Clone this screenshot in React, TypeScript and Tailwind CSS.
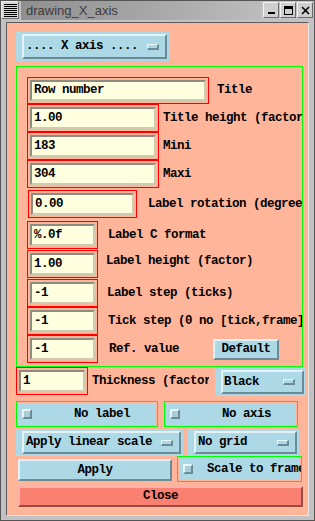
import React from "react";

const raised =
  "border-2 border-t-[#e2f2f7] border-l-[#e2f2f7] border-b-[#6b8c96] border-r-[#6b8c96] bg-[#add8e6]";
const entry =
  "flex-1 flex items-center pl-[2px] bg-[#ffffe0] border-2 border-t-[#8c8c82] border-l-[#8c8c82] border-b-[#cdcbb2] border-r-[#cdcbb2]";

const Indicator = ({ cls }: { cls: string }) => (
  <span
    className={`block shrink-0 w-[12px] h-[6px] bg-[#add8e6] border-t border-l border-t-[#e8f6fa] border-l-[#e8f6fa] border-b-2 border-r-2 border-b-[#6b8c96] border-r-[#6b8c96] ${cls}`}
  />
);

const Check = () => (
  <span className="block shrink-0 w-[10px] h-[10px] bg-[#a9cdd8] border-2 border-t-[#e8f6fa] border-l-[#e8f6fa] border-b-[#6b8c96] border-r-[#6b8c96]" />
);

const Menu = ({ outer, label, textCls, indCls }: { outer: string; label: string; textCls: string; indCls: string }) => (
  <div className={`shrink-0 bg-[#add8e6] pl-[6px] pr-[2px] py-[2px] ${outer}`}>
    <div className={`h-full flex items-center ${raised}`}>
      <span className={`whitespace-pre ${textCls}`}>{label}</span>
      <Indicator cls={`ml-auto ${indCls}`} />
    </div>
  </div>
);

const Field = ({ box, value }: { box: string; value: string }) => (
  <div className={`shrink-0 flex h-full border border-[#ff0000] p-[2px] ${box}`}>
    <div className={entry}>{value}</div>
  </div>
);

const CheckBox = ({ cls, label, textCls }: { cls: string; label: string; textCls: string }) => (
  <div className={`shrink-0 border border-[#00ff00] p-[1px] overflow-hidden ${cls}`}>
    <div className="h-full bg-[#add8e6] flex items-center pl-[4px] whitespace-nowrap">
      <Check />
      <span className={`shrink-0 ${textCls}`}>{label}</span>
    </div>
  </div>
);

export default function App() {
  return (
    <div className="w-[315px] h-[521px] bg-[#c2c2c2] border border-[#555555] flex flex-col overflow-hidden font-['Liberation_Mono',monospace] font-bold text-[12.5px] tracking-[-0.5px] text-black">
      {/* title bar */}
      <div className="h-[20px] flex tracking-normal">
        <div className="w-[18px] h-[18px] bg-[#d6d6d6] border border-t-[#f0f0f0] border-l-[#f0f0f0] border-b-[#707070] border-r-[#707070] flex items-center justify-center">
          <svg width="13" height="13" viewBox="0 0 13 13">
            {[0, 2, 4, 6, 8, 10, 12].map((y) => (
              <rect key={y} x="0" y={y} width="13" height="1" fill="#000" />
            ))}
          </svg>
        </div>
        <div className="ml-[2px] w-[240px] h-[19px] bg-gradient-to-r from-[#8f8f8f] to-[#bcbcbc] flex items-center pl-[5px] font-['Liberation_Sans',sans-serif] font-normal text-[13px] text-[#3c3c3c]">
          drawing_X_axis
        </div>
        <div className="flex gap-[1px] ml-[2px] mt-[1px]">
          <div className="w-[16px] h-[16px] bg-[#cfcfcf] border border-t-[#f2f2f2] border-l-[#f2f2f2] border-b-[#6a6a6a] border-r-[#6a6a6a] flex items-end justify-center pb-[3px]">
            <span className="block w-[7px] h-[2px] bg-black" />
          </div>
          <div className="w-[16px] h-[16px] bg-[#cfcfcf] border border-t-[#f2f2f2] border-l-[#f2f2f2] border-b-[#6a6a6a] border-r-[#6a6a6a] flex items-center justify-center">
            <span className="block w-[9px] h-[9px] border border-black border-t-[3px]" />
          </div>
          <div className="w-[16px] h-[16px] bg-[#cfcfcf] border border-t-[#f2f2f2] border-l-[#f2f2f2] border-b-[#6a6a6a] border-r-[#6a6a6a] flex items-center justify-center">
            <svg width="9" height="9" viewBox="0 0 9 9">
              <path d="M1 1L8 8M8 1L1 8" stroke="#000" strokeWidth="1.6" />
            </svg>
          </div>
        </div>
      </div>

      {/* body */}
      <div className="flex-1 mt-[1px] mx-[5px] mb-[4px] bg-[#ffb59a] border border-t-[#5c5c5c] border-l-[#5c5c5c] border-b-[#e6e6e6] border-r-[#e6e6e6] flex flex-col">
        <Menu outer="ml-[9px] mt-[9px] w-[153px] h-[29px]" label=".... X axis ...." textCls="pl-[2px]" indCls="mr-[6px]" />

        <div className="ml-[9px] mt-[5px] w-[287px] h-[301px] border border-[#00ff00] overflow-hidden flex flex-col pl-[10px] pt-[10px] whitespace-nowrap">
          <div className="h-[27px] flex items-center">
            <Field box="w-[182px]" value="Row number" />
            <span className="ml-[8px]">Title</span>
          </div>
          <div className="h-[28px] flex items-center">
            <Field box="w-[132px]" value="1.00" />
            <span className="ml-[4px]">Title height (factor)</span>
          </div>
          <div className="h-[28px] flex items-center">
            <Field box="w-[132px]" value="183" />
            <span className="ml-[4px]">Mini</span>
          </div>
          <div className="h-[28px] flex items-center">
            <Field box="w-[132px]" value="304" />
            <span className="ml-[4px]">Maxi</span>
          </div>
          <div className="mt-[2px] h-[28px] flex items-center">
            <Field box="ml-[1px] w-[109px]" value="0.00" />
            <span className="ml-[11px]">Label rotation (degrees)</span>
          </div>
          <div className="mt-[3px] h-[28px] flex items-center">
            <Field box="w-[71px]" value="%.0f" />
            <span className="ml-[10px]">Label C format</span>
          </div>
          <div className="mt-[1px] h-[28px] flex items-center">
            <Field box="w-[71px]" value="1.00" />
            <span className="ml-[8px] mb-[6px]">Label height (factor)</span>
          </div>
          <div className="mt-[1px] h-[28px] flex items-center">
            <Field box="w-[71px]" value="-1" />
            <span className="ml-[9px]">Label step (ticks)</span>
          </div>
          <div className="h-[28px] flex items-center">
            <Field box="w-[71px]" value="-1" />
            <span className="ml-[10px]">Tick step (0 no [tick,frame])</span>
          </div>
          <div className="h-[28px] flex items-center">
            <Field box="w-[71px]" value="-1" />
            <span className="ml-[11px]">Ref. value</span>
            <div className={`shrink-0 ml-[34px] w-[66px] h-[21px] flex items-center justify-center ${raised}`}>Default</div>
          </div>
        </div>

        <div className="ml-[9px] h-[28px] flex items-center whitespace-nowrap">
          <Field box="w-[72px]" value="1" />
          <span className="shrink-0 ml-[4px] w-[117px] overflow-hidden">Thickness (factor)</span>
          <Menu outer="ml-[6px] mt-[2px] w-[91px] h-[28px]" label="Black" textCls="pl-[1px]" indCls="mr-[7px]" />
        </div>

        <div className="ml-[9px] mt-[6px] flex gap-[6px]">
          <CheckBox cls="w-[142px] h-[26px]" label="No label" textCls="ml-[42px]" />
          <CheckBox cls="w-[134px] h-[26px]" label="No axis" textCls="ml-[42px]" />
        </div>

        <div className="ml-[9px] mt-[2px] flex gap-[5px]">
          <Menu outer="w-[167px] h-[27px]" label="Apply linear scale" textCls="pl-[2px]" indCls="mr-[6px]" />
          <Menu outer="w-[111px] h-[27px]" label="No grid" textCls="pl-[2px]" indCls="mr-[6px]" />
        </div>

        <div className="ml-[11px] flex">
          <div className={`shrink-0 mt-[3px] w-[154px] h-[22px] flex items-center justify-center ${raised}`}>Apply</div>
          <CheckBox cls="ml-[5px] w-[125px] h-[26px]" label="Scale to frame" textCls="ml-[14px]" />
        </div>

        <div className="ml-[11px] mt-[4px] w-[285px] h-[21px] flex items-center justify-center bg-[#fa8072] border-2 border-t-[#fdb3a9] border-l-[#fdb3a9] border-b-[#964d44] border-r-[#964d44]">
          Close
        </div>
      </div>
    </div>
  );
}
